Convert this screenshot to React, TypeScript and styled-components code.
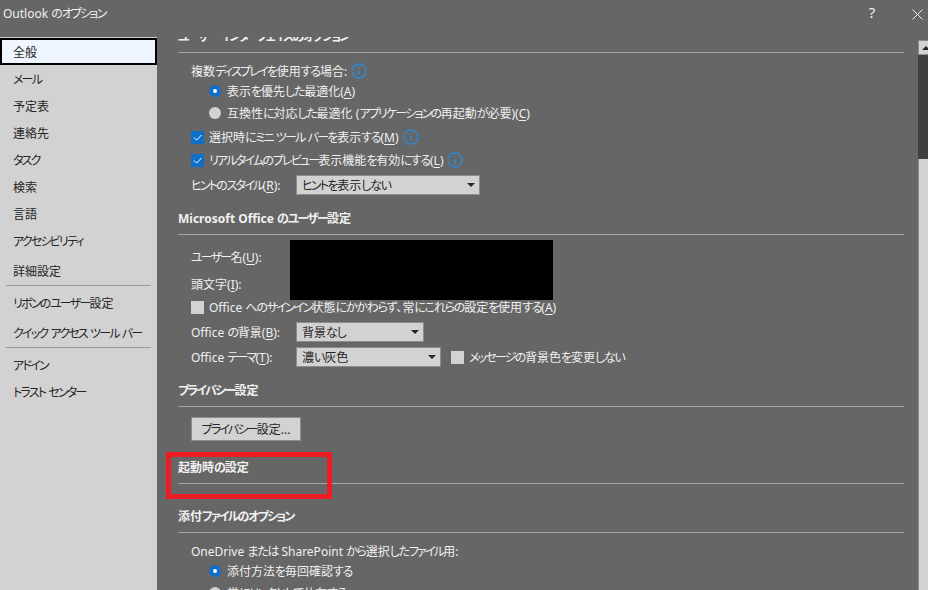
import React from 'react'
import styled, { createGlobalStyle } from 'styled-components'

const GlobalStyle = createGlobalStyle`
    html, body {
        margin: 0;
        height: 100%;
        overflow: hidden;
        background: #666666;
    }
    body {
        font-family: "Noto Sans", "Noto Sans CJK JP", sans-serif;
        font-size: 12px;
        font-feature-settings: "palt";
        color: #f0f0f0;
    }
    u {
        text-underline-offset: 2px;
    }
`

// the original font has much narrower kana than Noto, kanji are about the same
const Katakana = styled.span`
    letter-spacing: -1.8px;
`

const Hiragana = styled.span`
    letter-spacing: -1.2px;
`

const Jp: React.FC<{ children: string }> = ({ children }) => (
    <>
        {children.split(/([\u30a0-\u30ff]+|[\u3040-\u309f]+)/).map((part, i) => {
            if (/^[\u30a0-\u30ff]/.test(part)) return <Katakana key={i}>{part}</Katakana>
            if (/^[\u3040-\u309f]/.test(part)) return <Hiragana key={i}>{part}</Hiragana>
            return part
        })}
    </>
)

const Window = styled.div`
    width: 928px;
    height: 590px;
    display: flex;
    flex-direction: column;
    position: relative;
    overflow: hidden;
    background: #666666;
`

const TitleBar = styled.header`
    height: 37px;
    flex: none;
    display: flex;
    align-items: flex-start;
    padding: 5px 5px 0 3px;
    box-sizing: border-box;
    line-height: 17px;
`

const Title = styled.div`
    flex: 1;
    font-size: 12px;
`

const HelpButton = styled.div`
    width: 14px;
    margin-right: 33px;
    margin-top: -1px;
    font-size: 15px;
    text-align: center;
`

const CloseButton = styled.svg`
    width: 11px;
    height: 11px;
    margin-top: 4px;
    stroke: #f0f0f0;
    stroke-width: 1;
    fill: none;
`

const Body = styled.div`
    flex: 1;
    min-height: 0;
    display: flex;
`

const Sidebar = styled.nav`
    width: 157px;
    flex: none;
    box-sizing: border-box;
    padding-top: 1px;
    background: #d2d2d2;
    color: #262626;
`

const NavItem = styled.div<{ $active?: boolean; $gap?: number }>`
    height: 27px;
    box-sizing: border-box;
    display: flex;
    align-items: center;
    padding-left: ${p => (p.$active ? 11 : 13)}px;
    margin-top: ${p => p.$gap || 0}px;
    white-space: pre;
    background: ${p => (p.$active ? '#eff6ff' : 'transparent')};
    border: ${p => (p.$active ? '2px solid #000' : 'none')};
`

const NavSeparator = styled.div`
    height: 1px;
    margin: 1px 6px 3px;
    background: #999999;
`

const Panel = styled.main`
    flex: 1;
    min-width: 0;
    overflow: hidden;
    padding: 0 14px 0 21px;
`

const PanelInner = styled.div`
    margin-top: -16px;
`

const Heading = styled.h2<{ $gap?: number }>`
    height: 32px;
    box-sizing: border-box;
    margin: ${p => p.$gap || 0}px 0 0;
    padding-top: 7px;
    line-height: 17px;
    font-size: 12px;
    font-weight: 700;
    white-space: pre;
    border-bottom: 1px solid #a6a6a6;
`

const Row = styled.div<{ $gap?: number; $indent?: number }>`
    height: 20px;
    display: flex;
    align-items: center;
    margin-top: ${p => p.$gap || 0}px;
    margin-left: ${p => p.$indent || 13}px;
    white-space: pre;
`

const FieldLabel = styled.span`
    width: 105px;
    flex: none;
`

const Radio = styled.span<{ $checked?: boolean }>`
    width: 12px;
    height: 12px;
    flex: none;
    margin-right: 6px;
    box-sizing: border-box;
    border-radius: 50%;
    background: ${p => (p.$checked ? '#ffffff' : '#d2d2d2')};
    border: ${p => (p.$checked ? '4px solid #0e6fc8' : 'none')};
`

const CheckBox = styled.span<{ $checked?: boolean; $gap?: number }>`
    width: 13px;
    height: 13px;
    flex: none;
    display: flex;
    margin-left: ${p => p.$gap || 0}px;
    margin-right: 5px;
    box-sizing: border-box;
    background: ${p => (p.$checked ? '#0e6fc8' : '#d2d2d2')};
`

const Tick = styled.svg`
    width: 13px;
    height: 13px;
    fill: none;
    stroke: #ffffff;
    stroke-width: 1;
`

const InfoIcon = styled.svg`
    width: 16px;
    height: 16px;
    flex: none;
    margin-left: 4px;
    fill: none;
    stroke: #2b8ad8;
`

const Select = styled.div<{ $width: number }>`
    width: ${p => p.$width}px;
    height: 20px;
    flex: none;
    box-sizing: border-box;
    display: flex;
    align-items: center;
    justify-content: space-between;
    padding: 0 4px 0 5px;
    background: #d2d2d2;
    border: 1px solid #8c8c8c;
    color: #262626;
`

const Caret = styled.span`
    width: 0;
    height: 0;
    border-left: 4px solid transparent;
    border-right: 4px solid transparent;
    border-top: 4px solid #262626;
`

const PlainButton = styled.button`
    display: block;
    width: 110px;
    height: 24px;
    margin: 10px 0 0 13px;
    padding: 0;
    box-sizing: border-box;
    font: inherit;
    background: #d2d2d2;
    border: 1px solid #8c8c8c;
    color: #262626;
`

const ScrollBar = styled.div`
    width: 10px;
    flex: none;
    margin-top: 3px;
    display: flex;
    flex-direction: column;
    background: #404040;
`

const ScrollUp = styled.div`
    height: 15px;
    display: flex;
    align-items: center;
    justify-content: center;
    background: #d2d2d2;
    border: 1px solid #8c8c8c;
    border-right: none;
    box-sizing: border-box;
`

const ScrollCaret = styled.span`
    width: 0;
    height: 0;
    margin-left: 4px;
    border-left: 4px solid transparent;
    border-right: 4px solid transparent;
    border-bottom: 4px solid #262626;
`

const ScrollThumb = styled.div`
    flex: 1;
    margin-top: 104px;
    background: #d2d2d2;
    border-left: 1px solid #8c8c8c;
`

const Redaction = styled.div`
    position: absolute;
    left: 290px;
    top: 240px;
    width: 263px;
    height: 60px;
    background: #000;
`

const Highlight = styled.div`
    position: absolute;
    left: 166px;
    top: 452px;
    width: 166px;
    height: 47px;
    box-sizing: border-box;
    border: 5px solid #ed1c24;
`

const Info = () => (
    <InfoIcon viewBox="0 0 16 16">
        <circle cx="8" cy="8" r="7" strokeWidth="1.3" />
        <path d="M8 7v5" strokeWidth="1.6" />
        <path d="M8 4v1.6" strokeWidth="1.6" />
    </InfoIcon>
)

const Check = () => (
    <CheckBox $checked>
        <Tick viewBox="0 0 13 13">
            <path d="M3 6.5l2.6 2.6L10.5 4" />
        </Tick>
    </CheckBox>
)

const navGroups: { label: string; gap?: number }[][] = [
    [
        { label: '全般' },
        { label: 'メール' },
        { label: '予定表' },
        { label: '連絡先' },
        { label: 'タスク' },
        { label: '検索' },
        { label: '言語' },
        { label: 'アクセシビリティ' },
        { label: '詳細設定', gap: 3 },
    ],
    [{ label: 'リボンのユーザー設定' }, { label: 'クイック アクセス ツール バー', gap: 3 }],
    [{ label: 'アドイン' }, { label: 'トラスト センター' }],
]

const App: React.FC = () => (
    <Window>
        <GlobalStyle />
        <TitleBar>
            <Title><Jp>Outlook のオプション</Jp></Title>
            <HelpButton>?</HelpButton>
            <CloseButton viewBox="0 0 11 11">
                <path d="M0.5 0.5l10 10M10.5 0.5l-10 10" />
            </CloseButton>
        </TitleBar>
        <Body>
            <Sidebar>
                {navGroups.map((group, g) => (
                    <React.Fragment key={g}>
                        {g > 0 && <NavSeparator />}
                        {group.map(item => (
                            <NavItem key={item.label} $gap={item.gap} $active={item.label === '全般'}>
                                <span><Jp>{item.label}</Jp></span>
                            </NavItem>
                        ))}
                    </React.Fragment>
                ))}
            </Sidebar>
            <Panel>
                <PanelInner>
                    <Heading><Jp>ユーザー インターフェイスのオプション</Jp></Heading>
                    <Row $gap={8}>
                        <span><Jp>複数ディスプレイを使用する場合:</Jp></span>
                        <Info />
                    </Row>
                    <Row $indent={31}>
                        <Radio $checked />
                        <span><Jp>表示を優先した最適化</Jp>(<u>A</u>)</span>
                    </Row>
                    <Row $indent={31} $gap={2}>
                        <Radio />
                        <span><Jp>互換性に対応した最適化 (アプリケーションの再起動が必要)</Jp>(<u>C</u>)</span>
                    </Row>
                    <Row $gap={4}>
                        <Check />
                        <span><Jp>選択時にミニ ツール バーを表示する</Jp>(<u>M</u>)</span>
                        <Info />
                    </Row>
                    <Row $gap={3}>
                        <Check />
                        <span><Jp>リアルタイムのプレビュー表示機能を有効にする</Jp>(<u>L</u>)</span>
                        <Info />
                    </Row>
                    <Row $gap={5}>
                        <FieldLabel><Jp>ヒントのスタイル</Jp>(<u>R</u>):</FieldLabel>
                        <Select $width={184}>
                            <span><Jp>ヒントを表示しない</Jp></span>
                            <Caret />
                        </Select>
                    </Row>

                    <Heading $gap={8}><Jp>Microsoft Office のユーザー設定</Jp></Heading>
                    <Row $gap={12}>
                        <FieldLabel><Jp>ユーザー名</Jp>(<u>U</u>):</FieldLabel>
                    </Row>
                    <Row $gap={7}>
                        <FieldLabel><Jp>頭文字</Jp>(<u>I</u>):</FieldLabel>
                    </Row>
                    <Row $gap={3}>
                        <CheckBox />
                        <span><Jp>Office へのサインイン状態にかかわらず、常にこれらの設定を使用する</Jp>(<u>A</u>)</span>
                    </Row>
                    <Row $gap={5}>
                        <FieldLabel><Jp>Office の背景</Jp>(<u>B</u>):</FieldLabel>
                        <Select $width={128}>
                            <span><Jp>背景なし</Jp></span>
                            <Caret />
                        </Select>
                    </Row>
                    <Row $gap={5}>
                        <FieldLabel><Jp>Office テーマ</Jp>(<u>T</u>):</FieldLabel>
                        <Select $width={145}>
                            <span><Jp>濃い灰色</Jp></span>
                            <Caret />
                        </Select>
                        <CheckBox $gap={10} />
                        <span><Jp>メッセージの背景色を変更しない</Jp></span>
                    </Row>

                    <Heading $gap={8}><Jp>プライバシー設定</Jp></Heading>
                    <PlainButton type="button"><Jp>プライバシー設定...</Jp></PlainButton>

                    <Heading $gap={11}><Jp>起動時の設定</Jp></Heading>

                    <Heading $gap={17}><Jp>添付ファイルのオプション</Jp></Heading>
                    <Row $gap={8}>
                        <span><Jp>OneDrive または SharePoint から選択したファイル用:</Jp></span>
                    </Row>
                    <Row $indent={31}>
                        <Radio $checked />
                        <span><Jp>添付方法を毎回確認する</Jp></span>
                    </Row>
                    <Row $indent={31} $gap={2}>
                        <Radio />
                        <span><Jp>常にリンクとして共有する</Jp></span>
                    </Row>
                </PanelInner>
            </Panel>
            <ScrollBar>
                <ScrollUp>
                    <ScrollCaret />
                </ScrollUp>
                <ScrollThumb />
            </ScrollBar>
        </Body>
        <Redaction />
        <Highlight />
    </Window>
)

export default App
